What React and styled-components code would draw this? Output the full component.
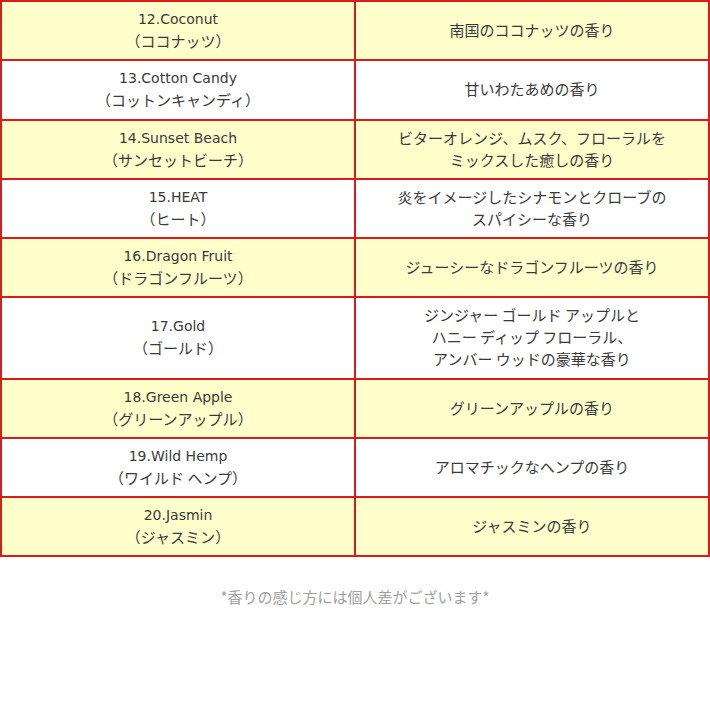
import React from "react";
import styled, { createGlobalStyle } from "styled-components";

const GlobalStyle = createGlobalStyle`
  html, body {
    margin: 0;
    padding: 0;
    background: #ffffff;
  }
  body {
    font-family: "Noto Sans CJK JP", "Noto Sans", sans-serif;
  }
`;

const Wrapper = styled.div`
  width: 710px;
`;

const Table = styled.table`
  width: 100%;
  border-collapse: collapse;
  border: 2px solid #dd1a1a;
  table-layout: fixed;
`;

const Row = styled.tr`
  background: ${(props) => (props.alt ? "#ffffcc" : "#ffffff")};
`;

const Cell = styled.td`
  border: 2px solid #dd1a1a;
  padding: 6px 8px 7.25px;
  text-align: center;
  vertical-align: middle;
  color: #3a3a3a;
  font-size: 15px;
  line-height: 22px;
`;

const Name = styled.div`
  font-family: "DejaVu Sans", "Noto Sans CJK JP", sans-serif;
  font-size: 14px;
  line-height: 22px;
  height: 22px;
`;

const Kana = styled.div`
  line-height: 22px;
`;

const Note = styled.p`
  margin: 29px 0 0;
  text-align: center;
  color: #a0a0a0;
  font-size: 15px;
  line-height: 22px;
`;

const scents = [
  { name: "12.Coconut", kana: "ココナッツ", desc: ["南国のココナッツの香り"] },
  { name: "13.Cotton Candy", kana: "コットンキャンディ", desc: ["甘いわたあめの香り"] },
  {
    name: "14.Sunset Beach",
    kana: "サンセットビーチ",
    desc: ["ビターオレンジ、ムスク、フローラルを", "ミックスした癒しの香り"],
  },
  {
    name: "15.HEAT",
    kana: "ヒート",
    desc: ["炎をイメージしたシナモンとクローブの", "スパイシーな香り"],
  },
  { name: "16.Dragon Fruit", kana: "ドラゴンフルーツ", desc: ["ジューシーなドラゴンフルーツの香り"] },
  {
    name: "17.Gold",
    kana: "ゴールド",
    desc: ["ジンジャー ゴールド アップルと", "ハニー ディップ フローラル、", "アンバー ウッドの豪華な香り"],
  },
  { name: "18.Green Apple", kana: "グリーンアップル", desc: ["グリーンアップルの香り"] },
  { name: "19.Wild Hemp", kana: "ワイルド ヘンプ", desc: ["アロマチックなヘンプの香り"] },
  { name: "20.Jasmin", kana: "ジャスミン", desc: ["ジャスミンの香り"] },
];

export default function App() {
  return (
    <Wrapper>
      <GlobalStyle />
      <Table>
        <tbody>
          {scents.map((s, i) => (
            <Row key={s.name} alt={i % 2 === 0}>
              <Cell>
                <Name>{s.name}</Name>
                <Kana>（{s.kana}）</Kana>
              </Cell>
              <Cell>
                {s.desc.map((line, j) => (
                  <React.Fragment key={j}>
                    {j > 0 && <br />}
                    {line}
                  </React.Fragment>
                ))}
              </Cell>
            </Row>
          ))}
        </tbody>
      </Table>
      <Note>*香りの感じ方には個人差がございます*</Note>
    </Wrapper>
  );
}
